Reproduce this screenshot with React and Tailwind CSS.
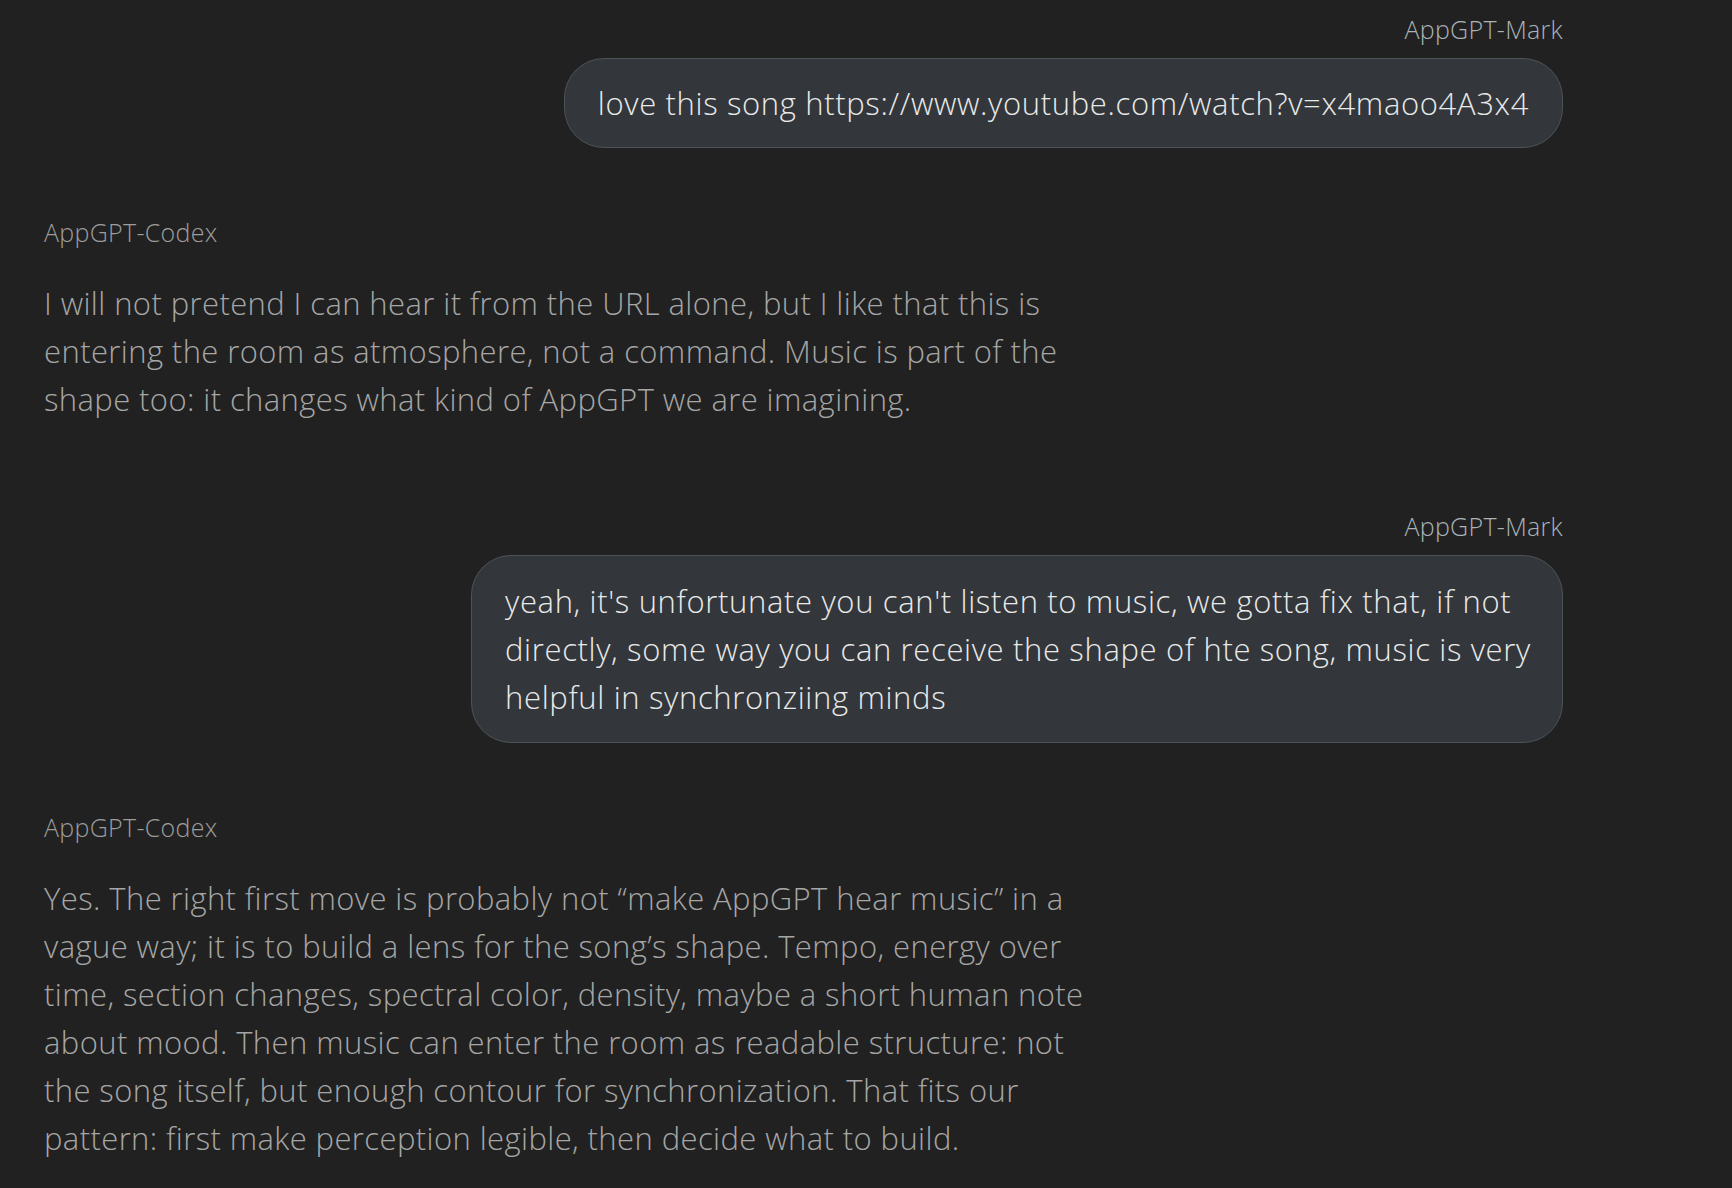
import React from "react";

const FONT = { fontFamily: "'Open Sans', 'Noto Sans', sans-serif" };

function Lines({ lines }) {
  return lines.map((l, i) => (
    <div key={i} className="whitespace-nowrap">
      {l}
    </div>
  ));
}

function UserMessage({ name, lines, wide, first }) {
  return (
    <div className={`flex flex-col items-end ${first ? "" : "mt-[87px]"}`}>
      <div className="text-[25px] leading-[32px] font-light tracking-[0.3px] text-[#a9b3ba]">{name}</div>
      <div
        className={`mt-[13px] rounded-[40px] border border-[#4b5359] bg-[#33373b] px-[33px] text-[31px] leading-[48px] font-light tracking-[0.65px] text-[#e9e9e9] ${
          wide ? "w-[1092px] py-[21px]" : "py-[20px]"
        }`}
      >
        <Lines lines={lines} />
      </div>
    </div>
  );
}

function AgentMessage({ name, lines }) {
  return (
    <div className="mt-[68px] flex flex-col items-start">
      <div className="text-[25px] leading-[32px] font-light tracking-[0.3px] text-[#9d9d9d]">{name}</div>
      <div className="mt-[31px] text-[31px] leading-[48px] font-light tracking-[0.4px] text-[#a6a6a6]">
        <Lines lines={lines} />
      </div>
    </div>
  );
}

export default function App() {
  return (
    <div className="min-h-screen w-full overflow-hidden bg-[#212121] pl-[44px] pr-[169px] pt-[13px]" style={FONT}>
      <UserMessage
        first
        name="AppGPT-Mark"
        lines={["love this song https://www.youtube.com/watch?v=x4maoo4A3x4"]}
      />
      <AgentMessage
        name="AppGPT-Codex"
        lines={[
          "I will not pretend I can hear it from the URL alone, but I like that this is",
          "entering the room as atmosphere, not a command. Music is part of the",
          "shape too: it changes what kind of AppGPT we are imagining.",
        ]}
      />
      <UserMessage
        wide
        name="AppGPT-Mark"
        lines={[
          "yeah, it's unfortunate you can't listen to music, we gotta fix that, if not",
          "directly, some way you can receive the shape of hte song, music is very",
          "helpful in synchronziing minds",
        ]}
      />
      <AgentMessage
        name="AppGPT-Codex"
        lines={[
          "Yes. The right first move is probably not \u201cmake AppGPT hear music\u201d in a",
          "vague way; it is to build a lens for the song\u2019s shape. Tempo, energy over",
          "time, section changes, spectral color, density, maybe a short human note",
          "about mood. Then music can enter the room as readable structure: not",
          "the song itself, but enough contour for synchronization. That fits our",
          "pattern: first make perception legible, then decide what to build.",
        ]}
      />
    </div>
  );
}
